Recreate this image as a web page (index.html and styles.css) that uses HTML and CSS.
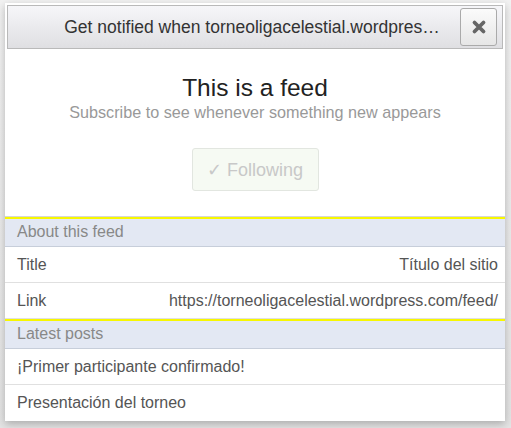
FILE: index.html
```html
<!DOCTYPE html>
<html>
<head>
<meta charset="utf-8">
<link rel="stylesheet" href="styles.css">
</head>
<body>
<div class="modal">
  <div class="bar">
    <div class="bar-title">Get notified when torneoligacelestial.wordpres…</div>
    <button class="close" aria-label="Close">
      <svg width="16" height="16" viewBox="0 0 16 16"><path d="M3.5 3.5 L12.5 12.5 M12.5 3.5 L3.5 12.5" stroke="#666" stroke-width="3.8" stroke-linecap="round"/></svg>
    </button>
  </div>
  <div class="intro">
    <h1 class="feed-title">This is a feed</h1>
    <p class="feed-sub">Subscribe to see whenever something new appears</p>
    <button class="follow">✓ Following</button>
  </div>
  <div class="section">
    <div class="section-head">About this feed</div>
    <div class="row"><span>Title</span><span>Título del sitio</span></div>
    <div class="row"><span>Link</span><span>https://torneoligacelestial.wordpress.com/feed/</span></div>
  </div>
  <div class="section">
    <div class="section-head">Latest posts</div>
    <div class="row">¡Primer participante confirmado!</div>
    <div class="row last">Presentación del torneo</div>
  </div>
</div>
</body>
</html>
```
FILE: styles.css
```css
html, body {
  margin: 0;
  padding: 0;
}
body {
  background: linear-gradient(#f2f2f2, #e4e4e4);
  height: 428px;
  overflow: hidden;
  font-family: "Liberation Sans", Arial, sans-serif;
}
.modal {
  margin: 3px 0 0 5px;
  width: 500px;
  background: #fff;
  box-shadow: 0 3px 8px rgba(0,0,0,0.25);
  padding-top: 2px;
}
.bar {
  margin: 0 2px;
  height: 42px;
  border: 1px solid #b9b9b9;
  background: linear-gradient(#f6f6f9, #dfdfe2);
  display: flex;
  align-items: center;
}
.bar-title {
  flex: 1;
  min-width: 0;
  overflow: hidden;
  text-align: center;
  font-size: 17.5px;
  color: #333;
  padding-left: 52px;
  white-space: nowrap;
}
.close {
  flex-shrink: 0;
  width: 37px;
  height: 38px;
  margin-right: 5px;
  margin-left: 16px;
  border: 1px solid #aaa;
  border-radius: 3px;
  background: linear-gradient(#fbfbfb, #e6e6e6);
  display: flex;
  align-items: center;
  justify-content: center;
  padding: 0;
}
.intro {
  text-align: center;
  padding-top: 25px;
  padding-bottom: 25px;
  border-bottom: 1px solid #d6d6d6;
}
.feed-title {
  margin: 0;
  font-size: 24.5px;
  line-height: 28px;
  font-weight: normal;
  color: #222;
}
.feed-sub {
  margin: 0;
  font-size: 16.2px;
  line-height: 20px;
  color: #999;
}
.follow {
  margin-top: 26px;
  width: 127px;
  height: 43px;
  border: 1px solid #e2e6e0;
  border-radius: 3px;
  background: #f6faf3;
  color: #c8c8c8;
  font-family: "Liberation Sans", Arial, sans-serif;
  font-size: 18px;
  padding: 0;
}
.section {
  border-top: 2px solid #f7f700;
}
.section-head {
  height: 27px;
  line-height: 26px;
  background: #e3e8f3;
  border-bottom: 1px solid #c7ceda;
  color: #888;
  font-size: 16px;
  padding-left: 12px;
}
.row {
  height: 35px;
  border-bottom: 1px solid #e0e0e0;
  display: flex;
  justify-content: space-between;
  align-items: center;
  padding: 0 7px 0 12px;
  font-size: 16px;
  color: #555;
}
.row.last {
  border-bottom: none;
  height: 36px;
}
```
